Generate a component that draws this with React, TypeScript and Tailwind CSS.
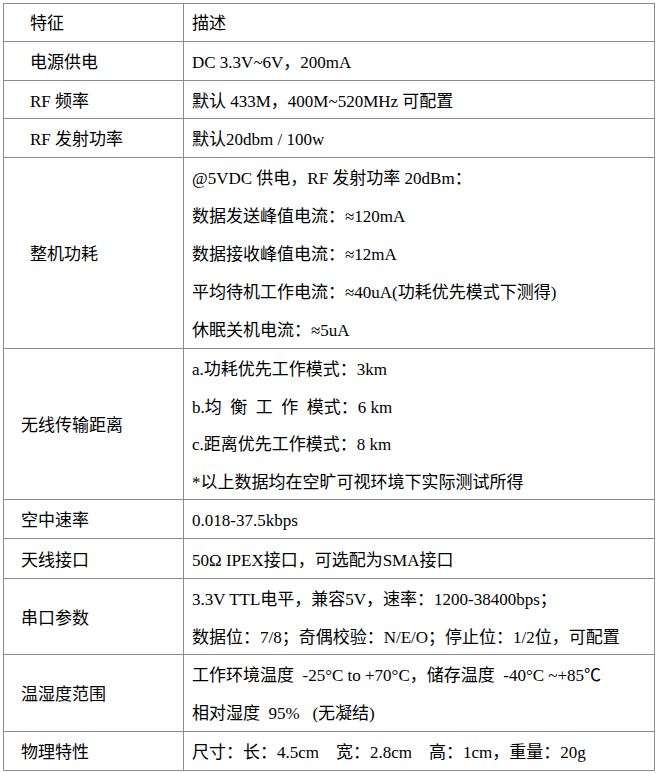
const rows: { label: string; lines: string[]; h: number; wide?: boolean }[] = [
  { label: "电源供电", lines: ["DC 3.3V~6V，200mA"], h: 38, wide: true },
  { label: "RF 频率", lines: ["默认 433M，400M~520MHz 可配置"], h: 37, wide: true },
  { label: "RF 发射功率", lines: ["默认20dbm / 100w"], h: 38, wide: true },
  {
    label: "整机功耗",
    wide: true,
    h: 190,
    lines: [
      "@5VDC 供电，RF 发射功率 20dBm：",
      "数据发送峰值电流：≈120mA",
      "数据接收峰值电流：≈12mA",
      "平均待机工作电流：≈40uA(功耗优先模式下测得)",
      "休眠关机电流：≈5uA",
    ],
  },
  {
    label: "无线传输距离",
    h: 150,
    lines: [
      "a.功耗优先工作模式：3km",
      "b.均  衡  工  作  模式：6 km",
      "c.距离优先工作模式：8 km",
      "*以上数据均在空旷可视环境下实际测试所得",
    ],
  },
  { label: "空中速率", lines: ["0.018-37.5kbps"], h: 38 },
  { label: "天线接口", lines: ["50Ω IPEX接口，可选配为SMA接口"], h: 39 },
  {
    label: "串口参数",
    h: 75,
    lines: [
      "3.3V TTL电平，兼容5V，速率：1200-38400bps；",
      "数据位：7/8；奇偶校验：N/E/O；停止位：1/2位，可配置",
    ],
  },
  {
    label: "温湿度范围",
    h: 76,
    lines: [
      "工作环境温度  -25°C to +70°C，储存温度  -40°C ~+85℃",
      "相对湿度  95%   (无凝结)",
    ],
  },
  { label: "物理特性", lines: ["尺寸：长：4.5cm    宽：2.8cm    高：1cm，重量：20g"], h: 38 },
];

export default function App() {
  return (
    <div
      className="min-h-screen bg-white p-[3px] text-[17px] text-black"
      style={{ fontFamily: '"Liberation Serif", "Noto Sans CJK SC", serif' }}
    >
      <table className="w-[652px] border-collapse border border-[#6f6f6f]">
        <tbody>
          <tr>
            <td className="w-[180px] border border-[#8c8c8c] pl-[26px] align-middle">
              <div className="flex h-[37px] items-center pt-[3px]">特征</div>
            </td>
            <td className="border border-[#8c8c8c] pl-[8px]">
              <div className="flex h-[37px] items-center pt-[3px]">描述</div>
            </td>
          </tr>
          {rows.map((r) => (
            <tr key={r.label}>
              <td
                className={
                  "w-[180px] border border-[#8c8c8c] pt-[4px] align-middle whitespace-pre " +
                  (r.wide ? "pl-[26px]" : "pl-[17px]")
                }
              >
                {r.label}
              </td>
              <td className="border border-[#8c8c8c] pl-[8px] align-middle">
                <div className="flex flex-col" style={{ height: r.h }}>
                  {r.lines.map((l) => (
                    <div key={l} className="flex flex-1 items-center pt-[4px] whitespace-pre">
                      {l}
                    </div>
                  ))}
                </div>
              </td>
            </tr>
          ))}
        </tbody>
      </table>
    </div>
  );
}
